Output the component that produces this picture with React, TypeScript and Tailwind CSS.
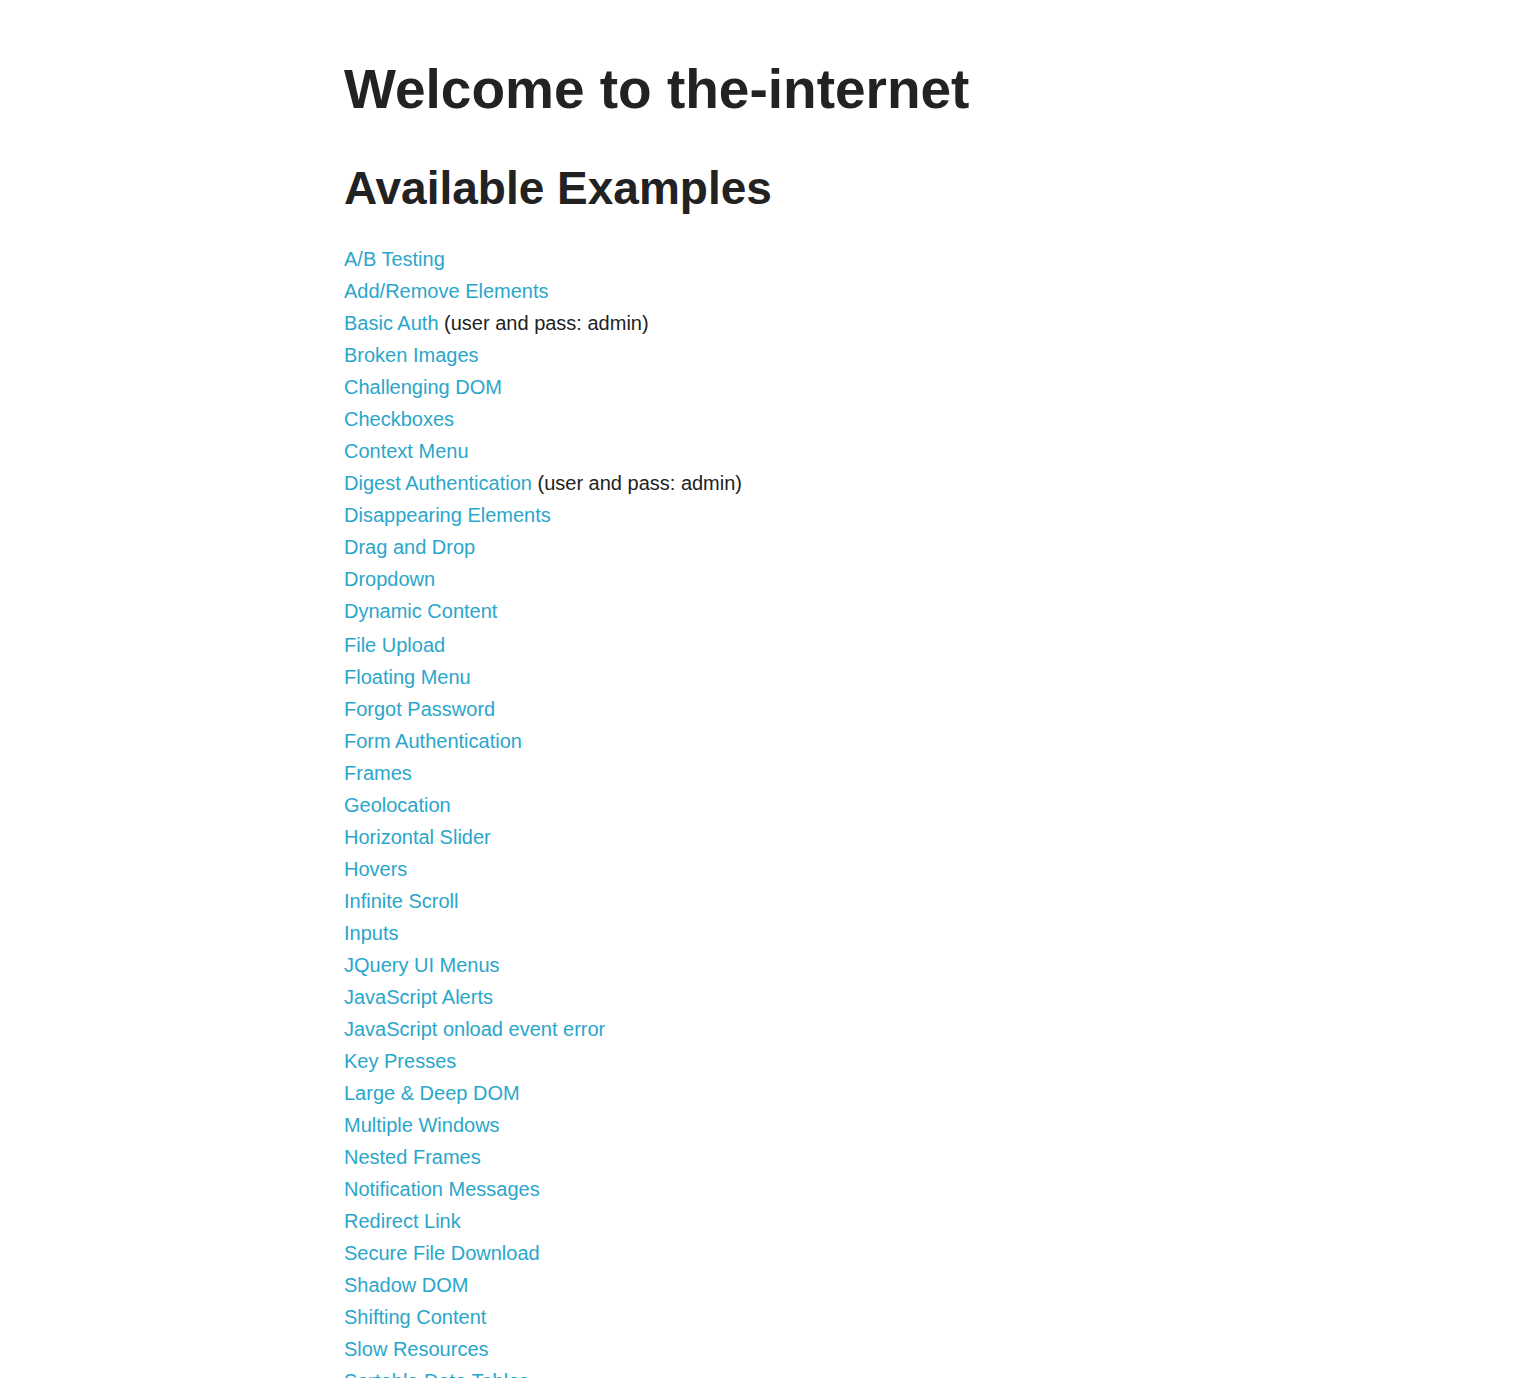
import React from "react";

type Example = { label: string; note?: string; extraTop?: boolean };

const examples: Example[] = [
  { label: "A/B Testing" },
  { label: "Add/Remove Elements" },
  { label: "Basic Auth", note: "(user and pass: admin)" },
  { label: "Broken Images" },
  { label: "Challenging DOM" },
  { label: "Checkboxes" },
  { label: "Context Menu" },
  { label: "Digest Authentication", note: "(user and pass: admin)" },
  { label: "Disappearing Elements" },
  { label: "Drag and Drop" },
  { label: "Dropdown" },
  { label: "Dynamic Content" },
  { label: "File Upload", extraTop: true },
  { label: "Floating Menu" },
  { label: "Forgot Password" },
  { label: "Form Authentication" },
  { label: "Frames" },
  { label: "Geolocation" },
  { label: "Horizontal Slider" },
  { label: "Hovers" },
  { label: "Infinite Scroll" },
  { label: "Inputs" },
  { label: "JQuery UI Menus" },
  { label: "JavaScript Alerts" },
  { label: "JavaScript onload event error" },
  { label: "Key Presses" },
  { label: "Large & Deep DOM" },
  { label: "Multiple Windows" },
  { label: "Nested Frames" },
  { label: "Notification Messages" },
  { label: "Redirect Link" },
  { label: "Secure File Download" },
  { label: "Shadow DOM" },
  { label: "Shifting Content" },
  { label: "Slow Resources" },
  { label: "Sortable Data Tables" },
  { label: "Status Codes" },
  { label: "Typos" },
  { label: "WYSIWYG Editor" },
];

export default function App() {
  return (
    <div className="min-h-screen bg-white font-['Liberation_Sans',Arial,sans-serif] text-[#222222]">
      <div className="pl-[344px] pb-10">
        <h1 className="mt-[55px] text-[55px] font-bold leading-[68px]">Welcome to the-internet</h1>
        <h2 className="mt-[37px] text-[46px] font-bold leading-[56px]">Available Examples</h2>
        <ul className="mt-[27px] text-[20px] leading-[32px]">
          {examples.map((ex) => (
            <li key={ex.label} className={ex.extraTop ? "mt-[2px]" : ""}>
              <a href="#" className="text-[#2ba6cb]">
                {ex.label}
              </a>
              {ex.note && <span> {ex.note}</span>}
            </li>
          ))}
        </ul>
      </div>
    </div>
  );
}
